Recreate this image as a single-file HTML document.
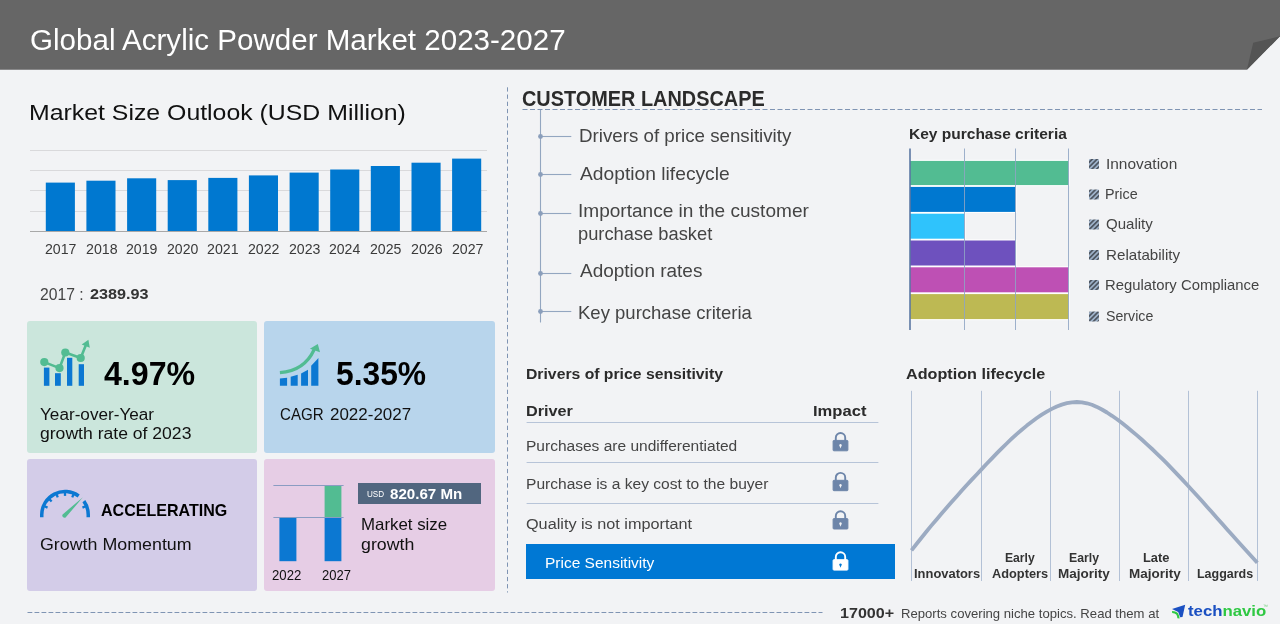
<!DOCTYPE html>
<html lang="en">
<head>
<meta charset="utf-8">
<title>Global Acrylic Powder Market 2023-2027</title>
<style>
  html,body{margin:0;padding:0;}
  body{width:1280px;height:624px;position:relative;overflow:hidden;background:#f2f3f5;
       font-family:"Liberation Sans",Arial,sans-serif;}
  .t{position:absolute;white-space:nowrap;line-height:1;display:block;transform-origin:0 50%;margin:0;padding:0;font-weight:400;font-style:normal;list-style:none;}
  #labels{position:absolute;left:0;top:0;width:1280px;height:624px;will-change:transform;}
  header.bar{position:absolute;left:0;top:0;width:1280px;height:69.7px;background:#666666;
       clip-path:polygon(0 0,1280px 0,1280px 36.3px,1246.9px 69.7px,0 69.7px);}
  .fold{position:absolute;left:0;top:0;width:1280px;height:70px;background:#545454;
       clip-path:polygon(1253.2px 42.8px,1280px 36.3px,1246.9px 69.7px);}
  .card{position:absolute;border-radius:3px;}
  #c1{left:27px;top:321px;width:230px;height:132px;background:#cbe6dc;}
  #c2{left:264px;top:321px;width:231px;height:132px;background:#b8d5ec;}
  #c3{left:27px;top:459px;width:230px;height:132px;background:#d3cce8;}
  #c4{left:264px;top:459px;width:231px;height:132px;background:#e6cde5;}
  .badge{position:absolute;left:358px;top:482.9px;width:122.8px;height:20.7px;background:#51667f;}
  .rowhl{position:absolute;left:526px;top:544.3px;width:368.6px;height:34.5px;background:#0078d4;}
  svg#gfx{position:absolute;left:0;top:0;}
</style>
</head>
<body>
<header class="bar"></header>
<div class="fold"></div>

<section id="cards">
  <div class="card" id="c1"></div>
  <div class="card" id="c2"></div>
  <div class="card" id="c3"></div>
  <div class="card" id="c4"></div>
  <div class="badge"></div>
</section>
<div class="rowhl"></div>

<svg id="gfx" width="1280" height="624" viewBox="0 0 1280 624">
  <defs>
    <pattern id="hatch" width="3.4" height="3.4" patternUnits="userSpaceOnUse" patternTransform="rotate(-45)">
      <rect width="3.4" height="3.4" fill="#9fb3cb"/>
      <rect width="3.4" height="1.75" fill="#4e5661"/>
    </pattern>
  </defs>

  <!-- market size bar chart -->
  <g stroke="#d9d9db" stroke-width="1" shape-rendering="crispEdges">
    <line x1="30" x2="487" y1="150.5" y2="150.5"/>
    <line x1="30" x2="487" y1="170.5" y2="170.5"/>
    <line x1="30" x2="487" y1="190.5" y2="190.5"/>
    <line x1="30" x2="487" y1="211.5" y2="211.5"/>
  </g>
  <g fill="#0078d0">
    <rect x="45.8" y="182.6" width="29.1" height="48.9"/>
    <rect x="86.4" y="180.7" width="29.1" height="50.8"/>
    <rect x="127.1" y="178.3" width="29.1" height="53.2"/>
    <rect x="167.7" y="180.1" width="29.1" height="51.4"/>
    <rect x="208.3" y="177.9" width="29.1" height="53.6"/>
    <rect x="248.9" y="175.4" width="29.1" height="56.1"/>
    <rect x="289.6" y="172.6" width="29.1" height="58.9"/>
    <rect x="330.2" y="169.5" width="29.1" height="62"/>
    <rect x="370.8" y="166" width="29.1" height="65.5"/>
    <rect x="411.5" y="162.7" width="29.1" height="68.8"/>
    <rect x="452.1" y="158.6" width="29.1" height="72.9"/>
  </g>
  <line x1="30" x2="487" y1="231.5" y2="231.5" stroke="#a8a8a8" stroke-width="1" shape-rendering="crispEdges"/>

  <!-- icon 1 : growth bars with line -->
  <g fill="#0c78d2">
    <rect x="43.9" y="367.6" width="5.5" height="18.2"/>
    <rect x="55" y="373.2" width="5.8" height="12.6"/>
    <rect x="67" y="357.8" width="5.3" height="28"/>
    <rect x="78.7" y="364.2" width="5.3" height="21.6"/>
  </g>
  <g fill="#52bc92" stroke="#52bc92">
    <polyline points="44.3,362.1 59.5,368.1 65.3,352.5 80.7,358 86.5,343.5" fill="none" stroke-width="2.6" stroke-linejoin="round"/>
    <circle cx="44.3" cy="362.1" r="4.1" stroke="none"/>
    <circle cx="59.5" cy="368.1" r="4.1" stroke="none"/>
    <circle cx="65.3" cy="352.5" r="4.1" stroke="none"/>
    <circle cx="80.7" cy="358" r="4.1" stroke="none"/>
    <polygon points="88.4,339.8 81.7,344.4 89.8,347.8" stroke="none"/>
  </g>

  <!-- icon 2 : CAGR -->
  <g fill="#0c78d2">
    <polygon points="279.9,378.4 287.1,377.7 287.1,385.8 279.9,385.8"/>
    <polygon points="290.7,376.7 297.7,374.8 297.7,385.8 290.7,385.8"/>
    <polygon points="301.1,373.5 308,369.7 308,385.8 301.1,385.8"/>
    <polygon points="311.2,365.7 318.4,358 318.4,385.8 311.2,385.8"/>
  </g>
  <path d="M279.9 372.6 C296 371.5 308 363 314.2 349.5" fill="none" stroke="#52bc92" stroke-width="3.2"/>
  <polygon points="317.8,344 309.9,348.8 320,352.2" fill="#52bc92"/>

  <!-- icon 3 : gauge -->
  <g fill="none" stroke="#0c78d2">
    <path d="M41.75 517.3 V514.8 A23.25 23.25 0 0 1 78.67 495.99" stroke-width="3.5"/>
    <path d="M83.86 501.14 A23.25 23.25 0 0 1 88.25 514.8 V517.3" stroke-width="3.5"/>
    <g stroke-width="2.3">
      <line x1="44.49" y1="506.30" x2="47.54" y2="507.57"/>
      <line x1="49.30" y1="499.10" x2="51.64" y2="501.44"/>
      <line x1="56.50" y1="494.29" x2="57.77" y2="497.34"/>
      <line x1="65.00" y1="492.60" x2="65.00" y2="495.90"/>
      <line x1="73.50" y1="494.29" x2="72.23" y2="497.34"/>
      <line x1="85.51" y1="506.30" x2="82.46" y2="507.57"/>
    </g>
  </g>
  <path d="M82.9 497.2 L65.6 517.6 A2.3 2.3 0 0 1 62.6 514.4 Z" fill="#52bc92"/>

  <!-- icon 4 : market size growth mini chart -->
  <rect x="279.4" y="517.5" width="17" height="43.7" fill="#0c78d2"/>
  <rect x="324.6" y="517.5" width="16.8" height="43.7" fill="#0c78d2"/>
  <rect x="324.6" y="485.7" width="16.8" height="31.8" fill="#52bc92"/>
  <g stroke="#8a9cc2" stroke-width="1">
    <line x1="273.4" x2="343.6" y1="485.5" y2="485.5"/>
    <line x1="273.4" x2="343.6" y1="517.5" y2="517.5"/>
  </g>

  <!-- dashed dividers -->
  <g stroke="#7f94b3" stroke-width="1" fill="none">
    <line x1="507.5" x2="507.5" y1="87.3" y2="592.5" stroke-dasharray="4.3 2.9"/>
    <line x1="522.5" x2="1262" y1="109.5" y2="109.5" stroke-dasharray="5 2.5"/>
    <line x1="27.5" x2="822.5" y1="612.5" y2="612.5" stroke-dasharray="4.8 2.2"/>
  </g>

  <!-- customer landscape tree -->
  <g stroke="#93a6c0" stroke-width="1.1">
    <line x1="540.5" x2="540.5" y1="110" y2="322.5"/>
    <line x1="540.5" x2="571.3" y1="136.5" y2="136.5"/>
    <line x1="540.5" x2="571.3" y1="174.5" y2="174.5"/>
    <line x1="540.5" x2="571.3" y1="213.5" y2="213.5"/>
    <line x1="540.5" x2="571.3" y1="273.5" y2="273.5"/>
    <line x1="540.5" x2="571.3" y1="311.5" y2="311.5"/>
  </g>
  <g fill="#8a9ebb">
    <circle cx="540.5" cy="136.5" r="2.4"/>
    <circle cx="540.5" cy="174.5" r="2.4"/>
    <circle cx="540.5" cy="213.5" r="2.4"/>
    <circle cx="540.5" cy="273.5" r="2.4"/>
    <circle cx="540.5" cy="311.5" r="2.4"/>
  </g>

  <!-- key purchase criteria -->
  <g stroke="#ffffff" stroke-width="2.2" paint-order="stroke">
    <rect x="910" y="160.9" width="158.5" height="24.2" fill="#52bc92"/>
    <rect x="910" y="186.9" width="105.5" height="25" fill="#0078d0"/>
    <rect x="910" y="213.7" width="54.5" height="25" fill="#2fc3fc"/>
    <rect x="910" y="240.5" width="105.5" height="25" fill="#6e51be"/>
    <rect x="910" y="267.3" width="158.5" height="25" fill="#be50b4"/>
    <rect x="910" y="294.1" width="158.5" height="25" fill="#bdb953"/>
  </g>
  <g stroke="#8fa5c4" stroke-width="1" opacity="0.85">
    <line x1="964.5" x2="964.5" y1="148.5" y2="330"/>
    <line x1="1015.5" x2="1015.5" y1="148.5" y2="330"/>
    <line x1="1068.5" x2="1068.5" y1="148.5" y2="330"/>
  </g>
  <line x1="910" x2="910" y1="148.5" y2="330" stroke="#5b77a3" stroke-width="1.6"/>
  <g fill="url(#hatch)">
    <rect x="1089" y="159" width="10" height="10" rx="1"/>
    <rect x="1089" y="189.4" width="10" height="10" rx="1"/>
    <rect x="1089" y="219.4" width="10" height="10" rx="1"/>
    <rect x="1089" y="250" width="10" height="10" rx="1"/>
    <rect x="1089" y="280" width="10" height="10" rx="1"/>
    <rect x="1089" y="311.5" width="10" height="10" rx="1"/>
  </g>

  <!-- drivers table -->
  <g stroke="#b7c4d8" stroke-width="1">
    <line x1="526.6" x2="878.4" y1="422.5" y2="422.5"/>
    <line x1="526.6" x2="878.4" y1="462.5" y2="462.5"/>
    <line x1="526.6" x2="878.4" y1="503.5" y2="503.5"/>
  </g>
  <g fill="#6d85a9" stroke="#6d85a9">
    <g transform="translate(833 432.1)"><path d="M2.8 8.6 V5.6 A4.7 4.7 0 0 1 12.2 5.6 V8.6" fill="none" stroke-width="1.9"/><rect x="0.1" y="8.3" width="14.8" height="10.4" rx="0.8"/></g>
    <g transform="translate(833 472)"><path d="M2.8 8.6 V5.6 A4.7 4.7 0 0 1 12.2 5.6 V8.6" fill="none" stroke-width="1.9"/><rect x="0.1" y="8.3" width="14.8" height="10.4" rx="0.8"/></g>
    <g transform="translate(833 510.3)"><path d="M2.8 8.6 V5.6 A4.7 4.7 0 0 1 12.2 5.6 V8.6" fill="none" stroke-width="1.9"/><rect x="0.1" y="8.3" width="14.8" height="10.4" rx="0.8"/></g>
  </g>
  <g fill="#ffffff" stroke="#ffffff">
    <g transform="translate(833 551.4)"><path d="M2.8 8.6 V5.6 A4.7 4.7 0 0 1 12.2 5.6 V8.6" fill="none" stroke-width="1.9"/><rect x="0.1" y="8.3" width="14.8" height="10.4" rx="0.8"/></g>
  </g>
  <g fill="#f2f3f5">
    <path d="M840.5 444.1 a1.3 1.3 0 0 1 0.75 2.35 l-0.75 2 l-0.75 -2 a1.3 1.3 0 0 1 0.75 -2.35z"/>
    <path d="M840.5 484 a1.3 1.3 0 0 1 0.75 2.35 l-0.75 2 l-0.75 -2 a1.3 1.3 0 0 1 0.75 -2.35z"/>
    <path d="M840.5 522.3 a1.3 1.3 0 0 1 0.75 2.35 l-0.75 2 l-0.75 -2 a1.3 1.3 0 0 1 0.75 -2.35z"/>
  </g>
  <path d="M840.5 563.4 a1.3 1.3 0 0 1 0.75 2.35 l-0.75 2 l-0.75 -2 a1.3 1.3 0 0 1 0.75 -2.35z" fill="#0078d4"/>

  <!-- adoption lifecycle -->
  <g stroke="#b3c1d6" stroke-width="1">
    <line x1="911.5" x2="911.5" y1="390.8" y2="581"/>
    <line x1="981.5" x2="981.5" y1="390.8" y2="581"/>
    <line x1="1050.5" x2="1050.5" y1="390.8" y2="581"/>
    <line x1="1119.5" x2="1119.5" y1="390.8" y2="581"/>
    <line x1="1188.5" x2="1188.5" y1="390.8" y2="581"/>
    <line x1="1257.5" x2="1257.5" y1="390.8" y2="581"/>
  </g>
  <path d="M911.5 550.4 L916.5 544.0 L921.5 537.7 L926.5 531.5 L931.5 525.4 L936.6 519.4 L941.6 513.6 L946.6 507.8 L951.6 502.0 L956.6 496.4 L961.6 490.8 L966.6 485.3 L971.6 479.9 L976.7 474.5 L981.7 469.1 L986.7 463.8 L991.7 458.6 L996.7 453.4 L1001.7 448.4 L1006.7 443.5 L1011.7 438.7 L1016.7 434.1 L1021.8 429.7 L1026.8 425.6 L1031.8 421.7 L1036.8 418.0 L1041.8 414.6 L1046.8 411.6 L1051.8 408.9 L1056.8 406.5 L1061.8 404.6 L1066.9 403.2 L1071.9 402.3 L1076.9 402.0 L1081.9 402.3 L1086.9 403.3 L1091.9 404.8 L1096.9 406.9 L1101.9 409.5 L1107.0 412.5 L1112.0 415.8 L1117.0 419.3 L1122.0 423.1 L1127.0 427.1 L1132.0 431.2 L1137.0 435.4 L1142.0 439.8 L1147.0 444.3 L1152.1 449.0 L1157.1 453.8 L1162.1 458.7 L1167.1 463.7 L1172.1 468.8 L1177.1 474.1 L1182.1 479.4 L1187.1 484.8 L1192.1 490.2 L1197.2 495.7 L1202.2 501.3 L1207.2 506.9 L1212.2 512.5 L1217.2 518.2 L1222.2 523.8 L1227.2 529.5 L1232.2 535.1 L1237.3 540.7 L1242.3 546.3 L1247.3 551.8 L1252.3 557.3 L1257.3 562.7"
        fill="none" stroke="#9cabc2" stroke-width="3.8" stroke-linejoin="round"/>

  <!-- technavio logo mark -->
  <g>
    <path d="M1172 610.9 Q1176.8 611.2 1178 613.3 Q1179.2 615.4 1179.6 618.4 L1177.4 618.2 Q1177.2 615.8 1176.2 614.6 Q1175 613.3 1172.2 613.1 Z" fill="#2fc843"/>
    <polygon points="1172,608.9 1185.2,604.8 1182.5,616.9 1180.2,617.3 1178.2,611.9" fill="#1b50c2"/>
  </g>
</svg>

<main id="labels">
<section class="grp" aria-label="Page title">
<h1 class="t title" style="left:30.01px;top:26.00px;font-size:28.92px;color:#fff;transform:scaleX(1.0226);">Global Acrylic Powder Market 2023-2027</h1>
</section>
<section class="grp" aria-label="Market size outlook">
<h2 class="t h1" style="left:29.20px;top:102.01px;font-size:22.53px;color:#111;transform:scaleX(1.1034);">Market Size Outlook (USD Million)</h2>
<span class="t yr" style="left:45.38px;top:242.02px;font-size:14.1px;color:#3a3a3a;transform:scaleX(1.0030);">2017</span>
<span class="t yr" style="left:85.90px;top:242.02px;font-size:14.1px;color:#3a3a3a;transform:scaleX(1.0067);">2018</span>
<span class="t yr" style="left:126.42px;top:242.02px;font-size:14.1px;color:#3a3a3a;transform:scaleX(1.0025);">2019</span>
<span class="t yr" style="left:166.95px;top:242.02px;font-size:14.1px;color:#3a3a3a;transform:scaleX(0.9976);">2020</span>
<span class="t yr" style="left:207.46px;top:242.02px;font-size:14.1px;color:#3a3a3a;transform:scaleX(1.0052);">2021</span>
<span class="t yr" style="left:247.98px;top:242.02px;font-size:14.1px;color:#3a3a3a;transform:scaleX(1.0030);">2022</span>
<span class="t yr" style="left:288.50px;top:242.02px;font-size:14.1px;color:#3a3a3a;transform:scaleX(1.0023);">2023</span>
<span class="t yr" style="left:329.04px;top:242.02px;font-size:14.1px;color:#3a3a3a;transform:scaleX(0.9965);">2024</span>
<span class="t yr" style="left:369.55px;top:242.02px;font-size:14.1px;color:#3a3a3a;transform:scaleX(1.0002);">2025</span>
<span class="t yr" style="left:410.68px;top:242.02px;font-size:14.1px;color:#3a3a3a;transform:scaleX(1.0075);">2026</span>
<span class="t yr" style="left:451.58px;top:242.02px;font-size:14.1px;color:#3a3a3a;transform:scaleX(1.0030);">2027</span>
<span class="t kv" style="left:39.91px;top:286.00px;font-size:16.28px;color:#444;transform:scaleX(0.9651);">2017 :</span>
<span class="t kv" style="left:90.34px;top:286.01px;font-size:15.55px;color:#333;font-weight:700;transform:scaleX(1.0431);">2389.93</span>
</section>
<section class="grp" aria-label="Year-over-year growth">
<strong class="t big" style="left:104.37px;top:358.00px;font-size:32.85px;color:#000;font-weight:700;transform:scaleX(0.9783);">4.97%</strong>
<span class="t ctext" style="left:39.75px;top:406.01px;font-size:16.42px;color:#111;transform:scaleX(1.0451);">Year-over-Year</span>
<span class="t ctext" style="left:39.56px;top:425.01px;font-size:16.42px;color:#111;transform:scaleX(1.0711);">growth rate of 2023</span>
</section>
<section class="grp" aria-label="CAGR">
<strong class="t big" style="left:336.40px;top:358.00px;font-size:32.85px;color:#000;font-weight:700;transform:scaleX(0.9682);">5.35%</strong>
<span class="t ctext" style="left:279.80px;top:406.01px;font-size:16.42px;color:#111;transform:scaleX(0.9215);">CAGR</span>
<span class="t ctext" style="left:329.60px;top:406.01px;font-size:16.42px;color:#111;transform:scaleX(1.0341);">2022-2027</span>
</section>
<section class="grp" aria-label="Growth momentum">
<strong class="t acc" style="left:100.72px;top:503.01px;font-size:15.99px;color:#000;font-weight:700;transform:scaleX(1.0033);">ACCELERATING</strong>
<span class="t ctext" style="left:40.00px;top:536.01px;font-size:16.42px;color:#111;transform:scaleX(1.0871);">Growth Momentum</span>
</section>
<section class="grp" aria-label="Market size growth">
<span class="t sm" style="left:271.56px;top:568.01px;font-size:14.39px;color:#111;transform:scaleX(0.9165);">2022</span>
<span class="t sm" style="left:322.39px;top:568.01px;font-size:14.39px;color:#111;transform:scaleX(0.9063);">2027</span>
<span class="t usd" style="left:367.49px;top:489.01px;font-size:9.74px;color:#fff;transform:scaleX(0.8350);">USD</span>
<span class="t mn" style="left:390.26px;top:486.00px;font-size:15.41px;color:#fff;font-weight:700;transform:scaleX(0.9806);">820.67 Mn</span>
<span class="t ctext" style="left:360.62px;top:516.00px;font-size:16.28px;color:#111;transform:scaleX(1.0357);">Market size</span>
<span class="t ctext" style="left:361.12px;top:536.00px;font-size:16.28px;color:#111;transform:scaleX(1.0917);">growth</span>
</section>
<section class="grp" aria-label="Customer landscape">
<h2 class="t h2" style="left:522.01px;top:89.01px;font-size:21.51px;color:#2b2b2b;font-weight:700;transform:scaleX(0.9249);">CUSTOMER LANDSCAPE</h2>
<span class="t li" style="left:578.79px;top:127.01px;font-size:18.46px;color:#444444;transform:scaleX(1.0160);">Drivers of price sensitivity</span>
<span class="t li" style="left:579.91px;top:165.01px;font-size:18.46px;color:#444444;transform:scaleX(1.0434);">Adoption lifecycle</span>
<span class="t li" style="left:578.35px;top:202.01px;font-size:18.46px;color:#444444;transform:scaleX(1.0332);">Importance in the customer</span>
<span class="t li" style="left:578.40px;top:225.01px;font-size:18.46px;color:#444444;transform:scaleX(0.9924);">purchase basket</span>
<span class="t li" style="left:579.89px;top:262.01px;font-size:18.46px;color:#444444;transform:scaleX(1.0295);">Adoption rates</span>
<span class="t li" style="left:578.26px;top:304.01px;font-size:18.46px;color:#444444;transform:scaleX(1.0040);">Key purchase criteria</span>
</section>
<section class="grp" aria-label="Key purchase criteria">
<h3 class="t h3" style="left:908.80px;top:126.01px;font-size:15.12px;color:#2b2b2b;font-weight:700;transform:scaleX(1.0269);">Key purchase criteria</h3>
<span class="t leg" style="left:1105.65px;top:156.01px;font-size:15.12px;color:#444444;transform:scaleX(1.0217);">Innovation</span>
<span class="t leg" style="left:1105.40px;top:186.01px;font-size:15.12px;color:#444444;transform:scaleX(0.9497);">Price</span>
<span class="t leg" style="left:1106.36px;top:216.01px;font-size:15.12px;color:#444444;transform:scaleX(0.9947);">Quality</span>
<span class="t leg" style="left:1106.33px;top:247.01px;font-size:15.12px;color:#444444;transform:scaleX(1.0032);">Relatability</span>
<span class="t leg" style="left:1105.40px;top:277.01px;font-size:15.12px;color:#444444;transform:scaleX(0.9825);">Regulatory Compliance</span>
<span class="t leg" style="left:1105.91px;top:308.01px;font-size:15.12px;color:#444444;transform:scaleX(0.9394);">Service</span>
</section>
<section class="grp" aria-label="Drivers of price sensitivity">
<h3 class="t h3" style="left:526.00px;top:366.00px;font-size:15.26px;color:#2b2b2b;font-weight:700;transform:scaleX(1.0324);">Drivers of price sensitivity</h3>
<strong class="t th" style="left:526.00px;top:403.01px;font-size:15.12px;color:#2b2b2b;font-weight:700;transform:scaleX(1.0729);">Driver</strong>
<strong class="t th" style="left:813.40px;top:403.01px;font-size:15.12px;color:#2b2b2b;font-weight:700;transform:scaleX(1.0966);">Impact</strong>
<span class="t td" style="left:525.78px;top:438.00px;font-size:15.26px;color:#444444;transform:scaleX(1.0184);">Purchases are undifferentiated</span>
<span class="t td" style="left:525.97px;top:476.00px;font-size:15.26px;color:#444444;transform:scaleX(1.0216);">Purchase is a key cost to the buyer</span>
<span class="t td" style="left:525.95px;top:516.00px;font-size:15.26px;color:#444444;transform:scaleX(1.0642);">Quality is not important</span>
<span class="t td" style="left:544.60px;top:555.00px;font-size:15.41px;color:#fff;transform:scaleX(1.0058);">Price Sensitivity</span>
</section>
<section class="grp" aria-label="Adoption lifecycle">
<h3 class="t h3" style="left:906.16px;top:366.00px;font-size:15.26px;color:#2b2b2b;font-weight:700;transform:scaleX(1.0603);">Adoption lifecycle</h3>
<span class="t lab" style="left:914.36px;top:568.00px;font-size:12.94px;color:#333;font-weight:700;transform:scaleX(0.9990);">Innovators</span>
<span class="t lab" style="left:1005.19px;top:552.00px;font-size:12.94px;color:#333;font-weight:700;transform:scaleX(0.9393);">Early</span>
<span class="t lab" style="left:992.33px;top:568.00px;font-size:12.94px;color:#333;font-weight:700;transform:scaleX(0.9884);">Adopters</span>
<span class="t lab" style="left:1068.97px;top:552.00px;font-size:12.94px;color:#333;font-weight:700;transform:scaleX(0.9468);">Early</span>
<span class="t lab" style="left:1058.03px;top:568.00px;font-size:12.94px;color:#333;font-weight:700;transform:scaleX(1.0435);">Majority</span>
<span class="t lab" style="left:1142.64px;top:552.00px;font-size:12.94px;color:#333;font-weight:700;transform:scaleX(0.9958);">Late</span>
<span class="t lab" style="left:1129.25px;top:568.00px;font-size:12.94px;color:#333;font-weight:700;transform:scaleX(1.0406);">Majority</span>
<span class="t lab" style="left:1197.30px;top:568.00px;font-size:12.94px;color:#333;font-weight:700;transform:scaleX(0.9645);">Laggards</span>
</section>
<section class="grp" aria-label="Footer">
<span class="t foot" style="left:840.40px;top:605.00px;font-size:15.41px;color:#333;font-weight:700;transform:scaleX(1.0448);">17000+</span>
<span class="t foot" style="left:901.20px;top:608.00px;font-size:12.94px;color:#444;transform:scaleX(1.0139);">Reports covering niche topics. Read them at</span>
<span class="t logo" style="left:1188.20px;top:604.02px;font-size:14.6px;color:#1b50c2;font-weight:700;transform:scaleX(1.1485);">tech<span style="color:#2fc843">navio</span></span>
<span class="t tm" style="left:1262.90px;top:604.00px;font-size:5px;color:#6fcf7a;">™</span>
</section>
</main>
</body>
</html>
